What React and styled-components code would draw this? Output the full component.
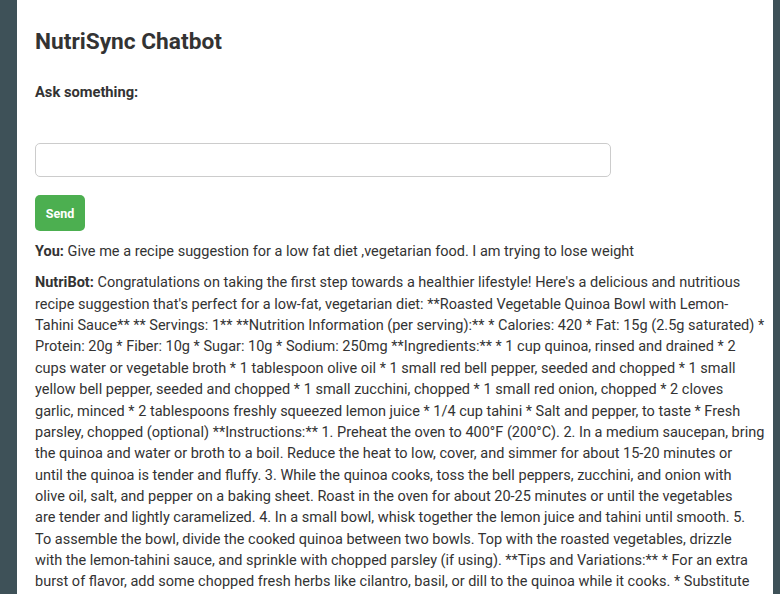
import React from 'react';
import styled, { createGlobalStyle } from 'styled-components';

const GlobalStyle = createGlobalStyle`
  html, body {
    margin: 0;
    padding: 0;
    background: #3e5158;
    font-family: Roboto, "Liberation Sans", sans-serif;
    color: #333;
  }
`;

const Page = styled.div`
  padding-left: 17px;
`;

const Card = styled.main`
  width: 756px;
  box-sizing: border-box;
  background: #fff;
  padding: 28px 18px 20px;
`;

const Title = styled.h2`
  margin: 0;
  font-size: 22.7px;
  line-height: 28px;
  font-weight: 700;
  color: #333;
`;

const Label = styled.label`
  display: block;
  margin-top: 25px;
  font-size: 14.7px;
  line-height: 22px;
  font-weight: 700;
`;

const Input = styled.input`
  display: block;
  box-sizing: border-box;
  width: 80%;
  height: 34px;
  margin-top: 40px;
  border: 1px solid #ccc;
  border-radius: 5px;
  padding: 0 10px;
  font: inherit;
  font-size: 14.4px;
  outline: none;
`;

const SendButton = styled.button`
  display: block;
  margin-top: 18px;
  height: 36px;
  width: 50px;
  padding: 0;
  border: none;
  border-radius: 5px;
  background: #4caf50;
  color: #fff;
  font-family: Roboto, "Liberation Sans", sans-serif;
  font-size: 12.5px;
  font-weight: 700;
  cursor: pointer;
`;

const Messages = styled.div`
  margin-top: 10px;
  display: flex;
  flex-direction: column;
  gap: 10px;
`;

const Message = styled.p`
  margin: 0;
  font-size: 14.5px;
  line-height: 21.36px;
  white-space: nowrap;
`;

const Speaker = styled.strong`
  font-weight: 700;
`;

// lines kept as the bot's reply was laid out
const history = [
  {
    who: 'You',
    lines: ['Give me a recipe suggestion for a low fat diet ,vegetarian food. I am trying to lose weight'],
  },
  {
    who: 'NutriBot',
    lines: [
      "Congratulations on taking the first step towards a healthier lifestyle! Here's a delicious and nutritious",
      "recipe suggestion that's perfect for a low-fat, vegetarian diet: **Roasted Vegetable Quinoa Bowl with Lemon-",
      'Tahini Sauce** ** Servings: 1** **Nutrition Information (per serving):** * Calories: 420 * Fat: 15g (2.5g saturated) *',
      'Protein: 20g * Fiber: 10g * Sugar: 10g * Sodium: 250mg **Ingredients:** * 1 cup quinoa, rinsed and drained * 2',
      'cups water or vegetable broth * 1 tablespoon olive oil * 1 small red bell pepper, seeded and chopped * 1 small',
      'yellow bell pepper, seeded and chopped * 1 small zucchini, chopped * 1 small red onion, chopped * 2 cloves',
      'garlic, minced * 2 tablespoons freshly squeezed lemon juice * 1/4 cup tahini * Salt and pepper, to taste * Fresh',
      'parsley, chopped (optional) **Instructions:** 1. Preheat the oven to 400°F (200°C). 2. In a medium saucepan, bring',
      'the quinoa and water or broth to a boil. Reduce the heat to low, cover, and simmer for about 15-20 minutes or',
      'until the quinoa is tender and fluffy. 3. While the quinoa cooks, toss the bell peppers, zucchini, and onion with',
      'olive oil, salt, and pepper on a baking sheet. Roast in the oven for about 20-25 minutes or until the vegetables',
      'are tender and lightly caramelized. 4. In a small bowl, whisk together the lemon juice and tahini until smooth. 5.',
      'To assemble the bowl, divide the cooked quinoa between two bowls. Top with the roasted vegetables, drizzle',
      'with the lemon-tahini sauce, and sprinkle with chopped parsley (if using). **Tips and Variations:** * For an extra',
      'burst of flavor, add some chopped fresh herbs like cilantro, basil, or dill to the quinoa while it cooks. * Substitute',
      'the quinoa with brown rice or farro for a different texture. * Add some protein like chickpeas or tofu to make',
      'the bowl more filling. Enjoy your healthy and delicious meal!',
    ],
  },
];

export default function App() {
  return (
    <>
      <GlobalStyle />
      <Page>
        <Card>
          <Title>NutriSync Chatbot</Title>
          <Label htmlFor="ask">Ask something:</Label>
          <Input id="ask" type="text" />
          <SendButton type="button">Send</SendButton>
          <Messages>
            {history.map((m, i) => (
              <Message key={i}>
                <Speaker>{m.who}:</Speaker>{' '}
                {m.lines.map((line, j) => (
                  <React.Fragment key={j}>
                    {j > 0 && <br />}
                    {line}
                  </React.Fragment>
                ))}
              </Message>
            ))}
          </Messages>
        </Card>
      </Page>
    </>
  );
}
